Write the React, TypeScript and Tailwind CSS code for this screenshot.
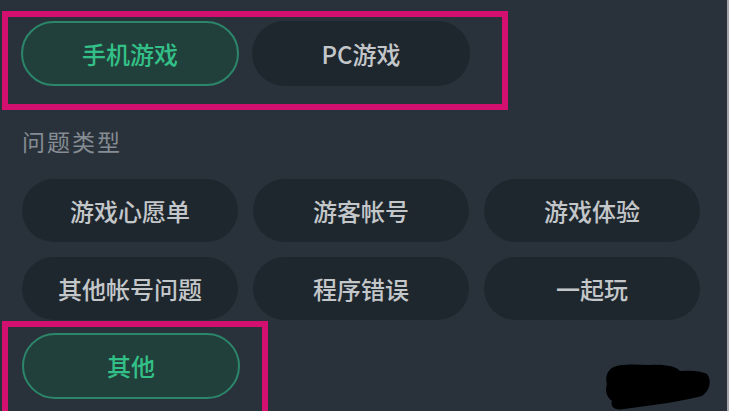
const font = { fontFamily: '"Noto Sans CJK SC", "Noto Sans", sans-serif' };

const platforms = [
  { label: '手机游戏', active: true },
  { label: 'PC游戏', active: false },
];

const topics = ['游戏心愿单', '游客帐号', '游戏体验', '其他帐号问题', '程序错误', '一起玩'];

const Chip = ({ label, active, className = '' }: { label: string; active?: boolean; className?: string }) => (
  <div
    className={
      active
        ? `flex items-center justify-center rounded-full border-2 border-[#2b866a] bg-[#22403b] text-[24px] font-medium text-[#33c088] ${className}`
        : `flex items-center justify-center rounded-full bg-[#1f272e] text-[24px] font-medium text-[#c4c7ca] ${className}`
    }
  >
    {label}
  </div>
);

export default function App() {
  return (
    <div className="relative h-[411px] w-[729px] overflow-hidden bg-[#29323b]" style={font}>
      {/* platform selector, highlighted */}
      <div className="ml-[2px] mt-[11px] flex h-[99px] w-[506px] gap-[13px] border-[6px] border-[#d3106f] pl-[13px] pt-[4px]">
        {platforms.map((p) => (
          <Chip key={p.label} label={p.label} active={p.active} className="h-[65px] w-[218px]" />
        ))}
      </div>

      <div className="ml-[22px] mt-[16px] text-[23px] leading-[30px] tracking-[2px] text-[#868c93]">问题类型</div>

      <div className="ml-[22px] mt-[23px] grid w-[678px] grid-cols-3 gap-x-[15px] gap-y-[15px]">
        {topics.map((t) => (
          <Chip key={t} label={t} className="h-[63px]" />
        ))}
      </div>

      {/* selected "other" topic, highlighted */}
      <div className="ml-[2px] mt-[1px] h-[100px] w-[266px] border-[6px] border-[#d3106f] pl-[14px] pt-[6px]">
        <Chip label="其他" active className="h-[66px] w-[218px]" />
      </div>

      {/* redaction scribble */}
      <svg className="absolute left-[604px] top-[363px]" width="108" height="48" viewBox="0 0 108 48">
        <path
          d="M8 5 C12 1 30 1 45 2 C60 1 72 3 76 8 C86 7 98 8 103 11 C108 17 106 28 98 33 C80 38 50 42 20 46 C10 48 6 43 8 38 C2 34 1 26 3 21 C1 15 3 8 8 5 Z"
          fill="#000"
        />
      </svg>

      <div className="absolute right-0 top-0 h-full w-[2px] bg-[#a3a7ab]" />
    </div>
  );
}
